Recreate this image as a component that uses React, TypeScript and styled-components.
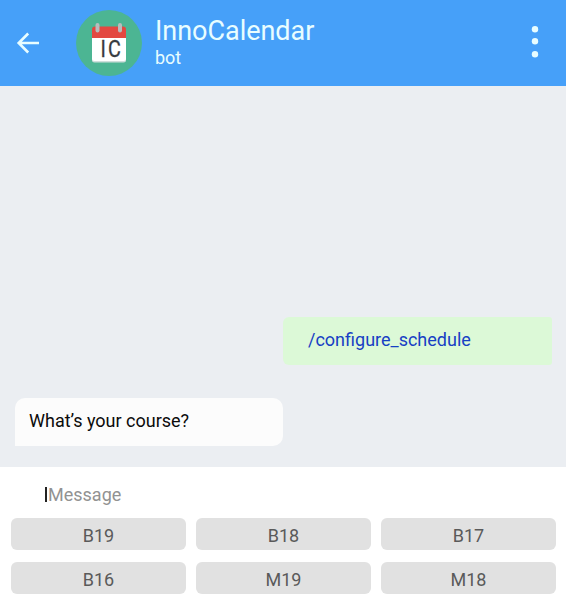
import React from "react";
import styled, { createGlobalStyle } from "styled-components";

const GlobalStyle = createGlobalStyle`
  * { box-sizing: border-box; }
  html, body { margin: 0; padding: 0; }
  body { font-family: Roboto, "Liberation Sans", sans-serif; background: #fff; }
`;

const Screen = styled.main`
  display: flex;
  flex-direction: column;
  height: 609px;
  width: 566px;
  overflow: hidden;
  background: #fff;
`;

const Header = styled.header`
  display: flex;
  align-items: center;
  flex: 0 0 86px;
  padding: 0 20px 0 16px;
  background: #46a0f9;
  color: #e8fdff;
`;

const IconButton = styled.button`
  display: flex;
  padding: 0;
  border: 0;
  background: none;
  color: inherit;
`;

const Avatar = styled.svg`
  flex: none;
  margin: 0 13px 0 36px;
`;

const AvatarText = styled.text`
  font-family: Roboto, sans-serif;
  font-size: 23.5px;
  letter-spacing: 2.5px;
  fill: #373b40;
  stroke: #373b40;
  stroke-width: 0.3px;
`;

const Identity = styled.div`
  flex: 1;
  padding-bottom: 2px;
`;

const Title = styled.h1`
  margin: 0;
  font-size: 27px;
  font-weight: 400;
  line-height: 32px;
  letter-spacing: -0.03px;
`;

const Subtitle = styled.p`
  margin: 0;
  font-size: 18px;
  line-height: 22px;
`;

const Chat = styled.section`
  display: flex;
  flex-direction: column;
  justify-content: flex-end;
  flex: 0 0 381px;
  gap: 33px;
  padding: 0 14px 21px 15px;
  background: #ebeef2;
`;

const Bubble = styled.div<{ $own?: boolean }>`
  width: ${(p) => (p.$own ? 269 : 268)}px;
  height: 48px;
  align-self: ${(p) => (p.$own ? "flex-end" : "flex-start")};
  padding-left: ${(p) => (p.$own ? 25 : 14)}px;
  border-radius: ${(p) => (p.$own ? "6px 3px 3px 6px" : "10px 10px 10px 0")};
  background: ${(p) => (p.$own ? "#dcf9d7" : "#fcfcfc")};
  color: ${(p) => (p.$own ? "#1740c4" : "#0b0b0b")};
  font-size: 18px;
  line-height: 46px;
  white-space: nowrap;
`;

const Composer = styled.div`
  display: flex;
  align-items: center;
  flex: 0 0 51px;
  padding: 4px 0 0 45px;
  color: #929292;
  font-size: 18px;
`;

const Caret = styled.span`
  width: 2px;
  height: 15px;
  margin-right: 1px;
  background: #222;
`;

const Keyboard = styled.div`
  display: grid;
  grid-template-columns: repeat(3, 175px);
  grid-auto-rows: 32px;
  gap: 12px 10px;
  padding-left: 11px;
`;

const Key = styled.button`
  padding: 3px 0 0;
  border: 0;
  border-radius: 6px;
  background: #e1e1e1;
  color: #5a5a5a;
  font-family: inherit;
  font-size: 18px;
  line-height: 29px;
`;

const keys = ["B19", "B18", "B17", "B16", "M19", "M18"];

export default function App() {
  return (
    <Screen>
      <GlobalStyle />
      <Header>
        <IconButton aria-label="Back">
          <svg width="24" height="24" viewBox="0 0 24 24" fill="none" stroke="currentColor" strokeWidth="2.6">
            <path d="M23 12H2.500M12.200 2.500 2.700 12l9.500 9.500" />
          </svg>
        </IconButton>
        <Avatar width="66" height="66" viewBox="0 0 66 66">
          <circle cx="33" cy="33" r="33" fill="#4cb593" />
          <rect x="16" y="20" width="34" height="32.500" rx="2.500" fill="#cfdedb" />
          <rect x="16" y="20" width="34" height="31" rx="2.500" fill="#fff" />
          <path d="M16 28v-8.500a3 3 0 0 1 3-3h28a3 3 0 0 1 3 3V28z" fill="#e34840" />
          <rect x="19.500" y="13" width="4" height="9.500" rx="2" fill="#b9bcbc" />
          <rect x="42" y="13" width="4" height="9.500" rx="2" fill="#b9bcbc" />
          <AvatarText transform="translate(24.500 47.200) scale(0.840 1)">IC</AvatarText>
        </Avatar>
        <Identity>
          <Title>InnoCalendar</Title>
          <Subtitle>bot</Subtitle>
        </Identity>
        <IconButton aria-label="Menu">
          <svg width="22" height="34" viewBox="0 0 22 34" fill="currentColor">
            <circle cx="11" cy="3.200" r="3.200" />
            <circle cx="11" cy="15.200" r="3.200" />
            <circle cx="11" cy="28.200" r="3.200" />
          </svg>
        </IconButton>
      </Header>
      <Chat>
        <Bubble $own>/configure_schedule</Bubble>
        <Bubble>What’s your course?</Bubble>
      </Chat>
      <Composer>
        <Caret />
        Message
      </Composer>
      <Keyboard>
        {keys.map((k) => (
          <Key key={k}>{k}</Key>
        ))}
      </Keyboard>
    </Screen>
  );
}
